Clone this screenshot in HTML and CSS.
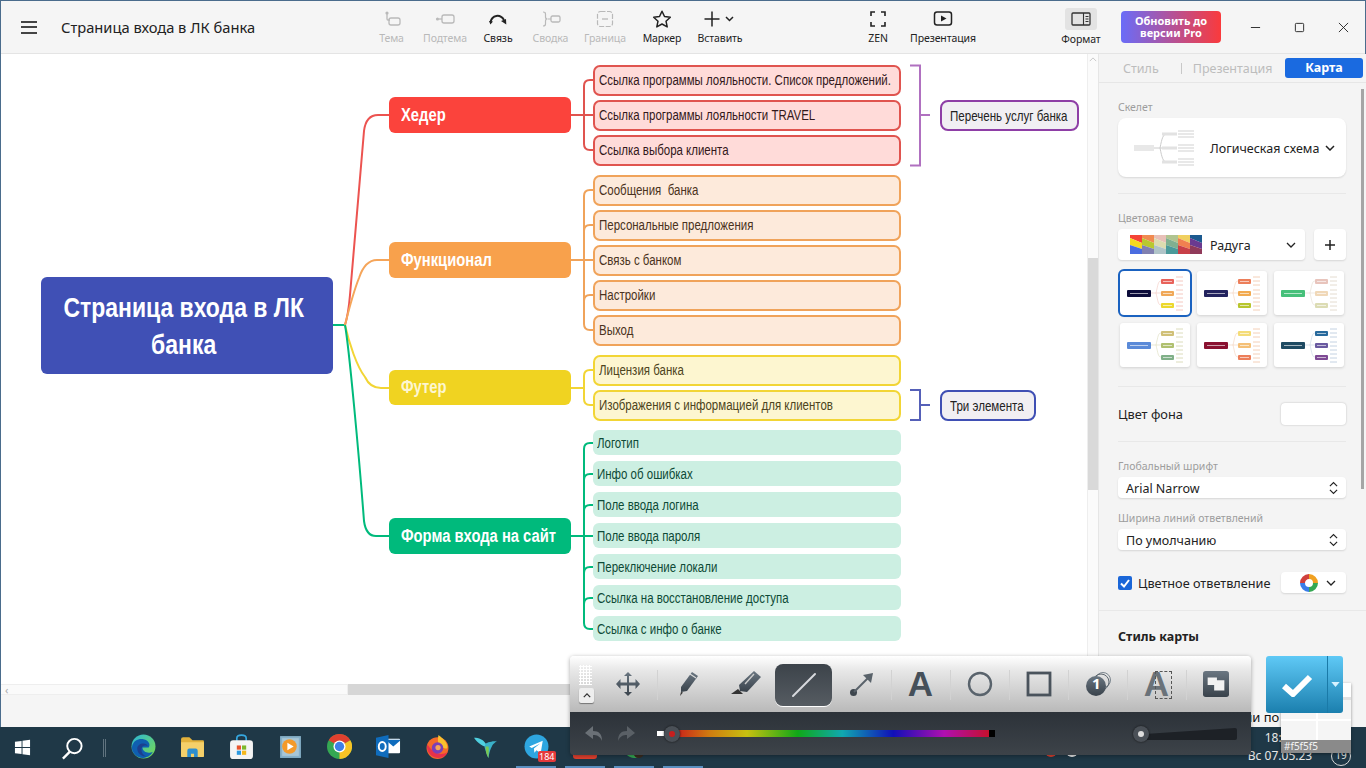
FILE: index.html
```html
<!DOCTYPE html>
<html lang="ru">
  <head>
    <meta charset="UTF-8" />
    <title>Страница входа в ЛК банка</title>
    <link rel="stylesheet" href="styles.css">
  </head>
  <body>
    <svg class="defs" width="0" height="0">
      <defs>
        <linearGradient id="edgeGrad" x1="0" y1="0" x2="1" y2="1">
          <stop offset="0" stop-color="#2bb5d8" />
          <stop offset="1" stop-color="#7bdc4a" />
        </linearGradient>
        <linearGradient id="iconGrad" x1="0" y1="0" x2="0" y2="1">
          <stop offset="0" stop-color="#6a7681" />
          <stop offset="1" stop-color="#39424b" />
        </linearGradient>
        <linearGradient id="rainbowGrad" x1="0" y1="0" x2="1" y2="0">
          <stop offset="0" stop-color="#c8231a" />
          <stop offset="0.1" stop-color="#d07a10" />
          <stop offset="0.22" stop-color="#c8c010" />
          <stop offset="0.38" stop-color="#10a818" />
          <stop offset="0.52" stop-color="#10a8b0" />
          <stop offset="0.68" stop-color="#1010b8" />
          <stop offset="0.84" stop-color="#b010b0" />
          <stop offset="1" stop-color="#c8101c" />
        </linearGradient>
        <symbol id="miniMap" viewBox="0 0 70 44">
          <g fill="none" stroke="var(--line)" stroke-width="0.6">
            <path d="M31 22h5M36 22c2-8 2-12 5-12M36 22h5M36 22c2 8 2 12 5 12" />
            <path d="M56 6h7M56 10h7M56 14h7M56 19h7M56 23h7M56 27h7M56 31h7M56 35h7M56 39h7" stroke-width="1" />
          </g>
          <rect x="7" y="19" width="24" height="7" rx="1" fill="var(--root)" />
          <rect x="41" y="8" width="13" height="5" rx="1" fill="var(--b1)" />
          <rect x="41" y="20" width="13" height="5" rx="1" fill="var(--b2)" />
          <rect x="41" y="32" width="13" height="5" rx="1" fill="var(--b3)" />
          <path d="M10 22.5h18M43 10.5h9M43 22.5h9M43 34.5h9" stroke="#fff" stroke-opacity=".6" stroke-width="1" />
        </symbol>
      </defs>
    </svg>

    <div class="window">
      <header class="titlebar">
        <button class="menu-btn" aria-label="Меню"><span></span><span></span><span></span></button>
        <div class="doc-title">Страница входа в ЛК банка</div>
        <nav class="tools">
          <div class="tool w53 off">
            <svg viewBox="0 0 20 18"><circle cx="5" cy="3" r="1.6" fill="currentColor"/><path d="M5 4v5q0 1 1 1h2" fill="none" stroke="currentColor" stroke-width="1.3"/><rect x="7" y="8" width="11" height="7" rx="2" fill="none" stroke="currentColor" stroke-width="1.3"/></svg>
            <span>Тема</span>
          </div>
          <div class="tool w54 off">
            <svg viewBox="0 0 20 18"><circle cx="2.5" cy="9" r="1.6" fill="currentColor"/><path d="M4 9h3" stroke="currentColor" stroke-width="1.3"/><rect x="7" y="5" width="12" height="8" rx="2" fill="none" stroke="currentColor" stroke-width="1.3"/></svg>
            <span>Подтема</span>
          </div>
          <div class="tool w52">
            <svg viewBox="0 0 20 18"><path d="M2.5 12C4 5 12 3.5 16 10" fill="none" stroke="#222" stroke-width="2"/><path d="M1 11l4 .6-2.6 3zM13 11l5-2 .3 5.4z" fill="#222"/></svg>
            <span>Связь</span>
          </div>
          <div class="tool w53 off">
            <svg viewBox="0 0 20 18"><path d="M2 2q2.5 0 2.5 2v3q0 2 2 2-2 0-2 2v3q0 2-2.500 2M7 9h3" fill="none" stroke="currentColor" stroke-width="1.2"/><rect x="10" y="6" width="9" height="6" rx="1.5" fill="none" stroke="currentColor" stroke-width="1.3"/></svg>
            <span>Сводка</span>
          </div>
          <div class="tool w56 off">
            <svg viewBox="0 0 20 18"><rect x="2.5" y="1.5" width="15" height="15" rx="3" fill="none" stroke="currentColor" stroke-width="1.2" stroke-dasharray="5 1.5"/><path d="M7 9h6" stroke="currentColor" stroke-width="1.3"/></svg>
            <span>Граница</span>
          </div>
          <div class="tool w58">
            <svg viewBox="0 0 20 18"><path d="M10 1.2l2.5 5.3 5.8.7-4.300 4 1.200 5.700-5.200-2.900-5.200 2.900 1.200-5.700-4.300-4 5.800-.7z" fill="none" stroke="#222" stroke-width="1.5" stroke-linejoin="round"/></svg>
            <span>Маркер</span>
          </div>
          <div class="tool w58">
            <svg class="wide" viewBox="0 0 32 18"><path d="M8 1.5v15M.5 9h15" stroke="#222" stroke-width="1.5"/><path d="M22 7l3.5 3.5L29 7" fill="none" stroke="#222" stroke-width="1.5"/></svg>
            <span>Вставить</span>
          </div>
        </nav>
        <nav class="tools view-tools">
          <div class="tool w50">
            <svg viewBox="0 0 20 18"><path d="M7 2H3v4M13 2h4v4M17 12v4h-4M7 16H3v-4" fill="none" stroke="#222" stroke-width="1.6"/></svg>
            <span>ZEN</span>
          </div>
          <div class="tool w80">
            <svg class="wide" viewBox="0 0 20 18"><rect x="1.5" y="2" width="17" height="13" rx="2.5" fill="none" stroke="#222" stroke-width="1.5"/><path d="M8 5.5l5.5 3-5.500 3z" fill="#222"/></svg>
            <span>Презентация</span>
          </div>
        </nav>
        <div class="tool format-tool">
          <div class="format-box">
            <svg viewBox="0 0 20 14"><rect x="1" y="1" width="18" height="12" rx="1" fill="none" stroke="#333" stroke-width="1.3"/><path d="M12.5 1v12M14.5 4.5h3M14.5 7h3M14.5 9.5h3" stroke="#333" stroke-width="1.1"/></svg>
          </div>
          <span>Формат</span>
        </div>
        <button class="upgrade">Обновить до<br>версии Pro</button>
        <div class="win-controls">
          <div class="win-btn"><svg viewBox="0 0 12 12"><path d="M1 6h10" stroke="#222"/></svg></div>
          <div class="win-btn"><svg viewBox="0 0 12 12"><rect x="1.5" y="1.5" width="9" height="9" rx="1" fill="none" stroke="#222"/></svg></div>
          <div class="win-btn"><svg viewBox="0 0 12 12"><path d="M1 1l10 10M11 1L1 11" stroke="#222"/></svg></div>
        </div>
      </header>

      <div class="main">
        <section class="workspace">
          <div class="canvas">
            <svg class="links" width="1086" height="630" fill="none" stroke-width="2">
              <g transform="translate(-1 -54)">
                <path d="M333 325h12" stroke="#00ba7c" />
                <path d="M345 325c3-10 4-18 5-30L364 131q2-16 14-16h11" stroke="#ec5350" />
                <path d="M345 325c3-12 8-32 14-47q6-18 18-18h12" stroke="#f5a55a" />
                <path d="M345 325c4 18 12 42 20 52q5 11 16 11h8" stroke="#f2d535" />
                <path d="M345 325c4 22 14 130 19 196q2 15 12 15h13" stroke="#00ba7c" />

                <path d="M571 115h22M593 80h-3q-6 0-6 6v58q0 6 6 6h3" stroke="#e0544f" />
                <path d="M571 260h22M593 190h-3q-6 0-6 6v128q0 6 6 6h3M584 231q0-6 6-6h3M584 301q0-6 6-6h3" stroke="#f0a35a" />
                <path d="M571 388h13M593 370h-3q-6 0-6 6v23q0 6 6 6h3" stroke="#f2d535" />
                <path d="M571 536h22M593 443h-3q-6 0-6 6v174q0 6 6 6h3M584 480q0-6 6-6h3M584 511q0-6 6-6h3M584 573q0-6 6-6h3M584 604q0-6 6-6h3" stroke="#00ba7c" />

                <path d="M910 65.5h10v100h-10M920 115h10" stroke="#b070c0" />
                <path d="M910 390h10v30h-10M920 405h10" stroke="#5560b8" />
              </g>
            </svg>

            <div class="node root"><span>Страница входа в ЛК<br>банка</span></div>
            <div class="node branch b-red"><span>Хедер</span></div>
            <div class="node branch b-orange"><span>Функционал</span></div>
            <div class="node branch b-yellow"><span>Футер</span></div>
            <div class="node branch b-green"><span>Форма входа на сайт</span></div>

            <div class="leaves">
              <div class="leaf-group red">
                <div class="leaf"><span>Ссылка программы лояльности. Список предложений.</span></div>
                <div class="leaf"><span>Ссылка программы лояльности TRAVEL</span></div>
                <div class="leaf"><span>Ссылка выбора клиента</span></div>
              </div>
              <div class="leaf-group orange">
                <div class="leaf"><span>Сообщения&nbsp; банка</span></div>
                <div class="leaf"><span>Персональные предложения</span></div>
                <div class="leaf"><span>Связь с банком</span></div>
                <div class="leaf"><span>Настройки</span></div>
                <div class="leaf"><span>Выход</span></div>
              </div>
              <div class="leaf-group yellow">
                <div class="leaf"><span>Лицензия банка</span></div>
                <div class="leaf"><span>Изображения с информацией для клиентов</span></div>
              </div>
              <div class="leaf-group green">
                <div class="leaf"><span>Логотип</span></div>
                <div class="leaf"><span>Инфо об ошибках</span></div>
                <div class="leaf"><span>Поле ввода логина</span></div>
                <div class="leaf"><span>Поле ввода пароля</span></div>
                <div class="leaf"><span>Переключение локали</span></div>
                <div class="leaf"><span>Ссылка на восстановление доступа</span></div>
                <div class="leaf"><span>Ссылка с инфо о банке</span></div>
              </div>
            </div>

            <div class="node note note-purple"><span>Перечень услуг банка</span></div>
            <div class="node note note-blue"><span>Три элемента</span></div>
          </div>
          <div class="hscroll"><div class="hscroll-left">‹</div><div class="hscroll-thumb"></div></div>
        </section>

        <div class="vscroll">
          <svg viewBox="0 0 10 6"><path d="M1 5l4-4 4 4" fill="none" stroke="#bbb"/></svg>
          <div class="vscroll-thumb"></div>
        </div>

        <aside class="panel">
          <div class="tabs">
            <span class="tab">Стиль</span>
            <span class="tab-sep"></span>
            <span class="tab">Презентация</span>
            <span class="tab active">Карта</span>
          </div>

          <div class="section skeleton">
            <div class="label">Скелет</div>
            <div class="card">
              <svg class="skeleton-pic" viewBox="0 0 60 36">
                <path d="M20 18h6M26 18c2-10 3-14 7-14M26 18c2 10 3 14 7 14M26 18h7" fill="none" stroke="#ccc"/>
                <rect y="15" width="20" height="6" fill="#e8e8e8"/>
                <path d="M28 4h15M28 18h15M28 32h15" stroke="#e2e2e2" stroke-width="3"/>
                <path d="M44 1h16M44 4h16M44 7h16M44 15h16M44 18h16M44 21h16M44 29h16M44 32h16M44 35h16" stroke="#e8e8e8" stroke-width="2"/>
              </svg>
              <span class="card-text">Логическая схема</span>
              <svg class="chev" viewBox="0 0 10 6"><path d="M1 1l4 4 4-4" fill="none" stroke="#222" stroke-width="1.5"/></svg>
            </div>
          </div>

          <div class="section theme">
            <div class="label">Цветовая тема</div>
            <div class="theme-row">
              <div class="select theme-select">
                <svg class="swatch" viewBox="0 0 72 19">
                  <path d="M0 0h12v8L0 3z" fill="#f44336"/><path d="M0 3l12 5v6L0 10z" fill="#f5d91e"/><path d="M0 10l12 4v5H0z" fill="#4a6ce0"/>
                  <path d="M12 0h12v8L12 3z" fill="#f08a50"/><path d="M12 3l12 5v6l-12-4z" fill="#b8c82e"/><path d="M12 10l12 4v5H12z" fill="#8080b0"/>
                  <path d="M24 0h12v8L24 3z" fill="#e8c0b8"/><path d="M24 3l12 5v6l-12-4z" fill="#dcdcb0"/><path d="M24 10l12 4v5H24z" fill="#b0c4c8"/>
                  <path d="M36 0h12v8L36 3z" fill="#b0c490"/><path d="M36 3l12 5v6l-12-4z" fill="#80b090"/><path d="M36 10l12 4v5H36z" fill="#4a9a9a"/>
                  <path d="M48 0h12v8L48 3z" fill="#f0d060"/><path d="M48 3l12 5v6l-12-4z" fill="#f08050"/><path d="M48 10l12 4v5H48z" fill="#c84048"/>
                  <path d="M60 0h12v8L60 3z" fill="#1c5a90"/><path d="M60 3l12 5v6l-12-4z" fill="#6a3a90"/><path d="M60 10l12 4v5H60z" fill="#903a5a"/>
                </svg>
                <span class="select-text">Радуга</span>
                <svg class="chev" viewBox="0 0 10 6"><path d="M1 1l4 4 4-4" fill="none" stroke="#222" stroke-width="1.3"/></svg>
              </div>
              <div class="select plus-btn"><svg viewBox="0 0 12 12"><path d="M6 1v10M1 6h10" stroke="#222" stroke-width="1.5"/></svg></div>
            </div>
            <div class="thumbs">
              <div class="thumb selected t1"><svg><use href="#miniMap"/></svg></div>
              <div class="thumb t2"><svg><use href="#miniMap"/></svg></div>
              <div class="thumb t3"><svg><use href="#miniMap"/></svg></div>
              <div class="thumb t4"><svg><use href="#miniMap"/></svg></div>
              <div class="thumb t5"><svg><use href="#miniMap"/></svg></div>
              <div class="thumb t6"><svg><use href="#miniMap"/></svg></div>
            </div>
          </div>

          <div class="section bg-row">
            <span>Цвет фона</span>
            <div class="color-box"></div>
          </div>

          <div class="section-wide">
            <div class="label">Глобальный шрифт</div>
            <div class="select small">
              <span>Arial Narrow</span>
              <svg class="updown" viewBox="0 0 10 14"><path d="M1 5l4-4 4 4M1 9l4 4 4-4" fill="none" stroke="#222" stroke-width="1.3"/></svg>
            </div>
            <div class="label second">Ширина линий ответвлений</div>
            <div class="select small">
              <span>По умолчанию</span>
              <svg class="updown" viewBox="0 0 10 14"><path d="M1 5l4-4 4 4M1 9l4 4 4-4" fill="none" stroke="#222" stroke-width="1.3"/></svg>
            </div>
            <div class="check-row">
              <span class="checkbox"><svg viewBox="0 0 14 14"><path d="M3 7.5l3 3 5-6.500" fill="none" stroke="#fff" stroke-width="2"/></svg></span>
              <span class="check-text">Цветное ответвление</span>
              <div class="select color-pick">
                <svg class="ring" viewBox="0 0 18 18">
                  <g fill="none" stroke-width="5">
                    <path d="M9 2.5a6.500 6.500 0 0 1 6.500 6.500" stroke="#f0a020"/>
                    <path d="M15.5 9A6.500 6.500 0 0 1 9 15.5" stroke="#35a853"/>
                    <path d="M9 15.5A6.500 6.500 0 0 1 2.5 9" stroke="#3a7de8"/>
                    <path d="M2.5 9A6.500 6.500 0 0 1 9 2.5" stroke="#d0403c"/>
                  </g>
                </svg>
                <svg class="chev" viewBox="0 0 10 6"><path d="M1 1l4 4 4-4" fill="none" stroke="#222" stroke-width="1.3"/></svg>
              </div>
            </div>
          </div>

          <div class="map-style">
            <div class="map-style-title">Стиль карты</div>
            <div class="map-style-row">Линии по Ш</div>
          </div>
          <div class="panel-scroll"></div>
        </aside>
      </div>
    </div>

    <footer class="taskbar">
      <div class="tb-start">
        <svg viewBox="0 0 18 18"><path d="M1 3l7-1v6.500H1zM9 1.900L17 .8v7.700H9zM1 9.500h7V16l-7-1zM9 9.500h8v7.700l-8-1.100z" fill="#fff"/></svg>
      </div>
      <div class="tb-search">
        <svg viewBox="0 0 24 24"><circle cx="14" cy="10" r="7.5" fill="none" stroke="#fff" stroke-width="2"/><path d="M9 16l-7 7" stroke="#fff" stroke-width="2.5"/></svg>
      </div>
      <div class="tb-sep"></div>
      <div class="tb-items">
        <div class="tb-item">
          <svg viewBox="0 0 24 24"><circle cx="12" cy="12" r="11.5" fill="url(#edgeGrad)"/><path d="M1 12C2 6 8 4 12 5c5 1 7 5 5 8h-6c0 3 3 5 6 5 1.500 0 3-.3 4-1-2 4-6 6-10 6C6 23 0 18 1 12z" fill="#0f5fb0"/><path d="M6 14c0-3 2.500-5 6-5 2 0 3.500 1 4 2.500-1.500-.8-6-1-6 3.500 0 3 2 5.500 5 6.500-5 .5-9-3-9-7.500z" fill="#1c3f8e"/></svg>
        </div>
        <div class="tb-item">
          <svg viewBox="0 0 24 24"><path d="M1 5q0-2 2-2h6l3 3h10q1 0 1 1v14q0 1-1 1H2q-1 0-1-1z" fill="#e3b23c"/><path d="M1 8h22v13q0 1-1 1H2q-1 0-1-1z" fill="#f5d06a"/><path d="M7 22v-6q0-2 2-2h6q2 0 2 2v6h-3.500v-3h-3v3z" fill="#2e8fd0"/></svg>
        </div>
        <div class="tb-item">
          <svg viewBox="0 0 24 24"><path d="M7.500 8V4q0-3 4.500-3t4.500 3v4" fill="none" stroke="#35a8e0" stroke-width="1.6"/><rect x="1" y="6" width="22" height="18" rx="3" fill="#f4f4f4"/><path d="M7.500 11h4v4h-4z" fill="#e8542c"/><path d="M12.500 11h4v4h-4z" fill="#7cb82a"/><path d="M7.500 16h4v4h-4z" fill="#2d9ae0"/><path d="M12.500 16h4v4h-4z" fill="#f5b81c"/></svg>
        </div>
        <div class="tb-item">
          <svg viewBox="0 0 24 24"><rect x="2" y="2" width="20" height="21" fill="#86b0c8"/><rect x="4" y="4" width="16" height="17" fill="#a8c6d6"/><circle cx="11" cy="12" r="7" fill="#f39a2a"/><path d="M9 8.500l6 3.500-6 3.500z" fill="#fff"/></svg>
        </div>
        <div class="tb-item">
          <svg viewBox="0 0 24 24"><circle cx="12" cy="12" r="12" fill="#35a853"/><path d="M12 12L1.600 6a12 12 0 0 1 20.800 0z" fill="#e0402f"/><path d="M12 12l10.400-6A12 12 0 0 1 12 24z" fill="#f7c325"/><circle cx="12" cy="12" r="5.8" fill="#fff"/><circle cx="12" cy="12" r="4.500" fill="#3f7fe8"/></svg>
        </div>
        <div class="tb-item">
          <svg viewBox="0 0 26 24"><path d="M9 4h15q1 0 1 1v13q0 1-1 1H9z" fill="#fff"/><path d="M11 6l7 6 7-6v-1H11z" fill="#0f6cbd"/><path d="M0 3l13-3v24L0 21z" fill="#0f6cbd"/><ellipse cx="6.5" cy="12" rx="3.6" ry="4.6" fill="none" stroke="#fff" stroke-width="2"/></svg>
        </div>
        <div class="tb-item">
          <svg viewBox="0 0 24 24"><circle cx="12" cy="13.5" r="10.5" fill="#f46a2a"/><path d="M13 1c2 2 6 4 8 9 2 6-2 4-6 2-3-2-3-7-2-11z" fill="#fbc02d"/><path d="M2 10c-1 8 5 13 11 13 4 0 7-2 9-6-4 3-10 3-14-1-3-2-4-4-6-6z" fill="#e8314a"/><circle cx="12" cy="13.5" r="5.5" fill="#7b3fb8"/><circle cx="12.5" cy="13" r="2.5" fill="#f5a55a"/></svg>
        </div>
        <div class="tb-item">
          <svg viewBox="0 0 26 24"><path d="M0 3c5 0 10 2 12 6l3 3c-2 1-5 0-8-2C4 8 2 6 0 3z" fill="#4fd0e0"/><path d="M12 9c2-1 4-2 6-2 2-1 4 0 6-1-2 2-4 3-5 5-2 4-3 7-4 13-2-4-3-8-4-11z" fill="#3ab0c8"/><path d="M15 12c1 3 0 7 0 12-2-3-3-8-3-12z" fill="#7cc850"/></svg>
        </div>
        <div class="tb-item open">
          <svg viewBox="0 0 24 24"><circle cx="12" cy="12" r="11.5" fill="#2ea6e0"/><path d="M5 12l13-5.500-2 12-4-3-2 2.500-.5-4 6-5-8 4.500z" fill="#fff"/></svg>
          <span class="badge">184</span>
        </div>
        <div class="tb-item open"><span class="app-red"></span></div>
        <div class="tb-item open">
          <svg viewBox="0 0 24 24"><circle cx="12" cy="12" r="11" fill="#35a853"/><circle cx="16" cy="18" r="5" fill="#3a2c20"/></svg>
        </div>
        <div class="tb-item open split"></div>
      </div>
      <div class="tray">
        <span class="tray-dot red"></span>
        <span class="tray-dot white"></span>
        <div class="clock"><div>18:52</div><div>Вс 07.05.23</div></div>
        <span class="notif">19</span>
      </div>
    </footer>

    <!-- screenshot tool floating over the window -->
    <div class="shot-bar">
      <div class="shot-tools">
        <div class="grip">
          <div class="grip-dots"></div>
          <div class="grip-btn"><svg viewBox="0 0 10 6"><path d="M1 5l4-4 4 4" fill="none" stroke="#333" stroke-width="1.6"/></svg></div>
        </div>
        <div class="shot-tool">
          <svg viewBox="0 0 26 26"><path d="M13 1l4 4h-3v6.500h6.500V8l4.500 5-4.500 5v-3.500H14V21h3l-4 4-4-4h3v-6.500H5.500V18L1 13l4.500-5v3.500H12V5H9z" fill="url(#iconGrad)"/></svg>
        </div>
        <div class="shot-tool sep">
          <svg viewBox="0 0 26 26"><path d="M18 1l6 4-11 15-6 1 0-5z" fill="url(#iconGrad)"/><path d="M16 3l6 4" stroke="#ddd" stroke-width="1.2"/><path d="M7 21l-1 4 3-3.500z" fill="#333"/></svg>
        </div>
        <div class="shot-tool">
          <svg class="marker" viewBox="0 0 32 28"><path d="M24 1l7 6-14 15-7-1-1-6z" fill="url(#iconGrad)"/><path d="M15 14l9-10" stroke="#ccc" stroke-width="1.4"/><path d="M8 19l5 5H1z" fill="#333"/></svg>
        </div>
        <div class="shot-tool active">
          <svg viewBox="0 0 26 26"><path d="M2 24L24 2" stroke="#d8dade" stroke-width="2" stroke-linecap="round"/></svg>
        </div>
        <div class="shot-tool">
          <svg viewBox="0 0 26 26"><circle cx="4.500" cy="21.500" r="3.5" fill="#3e464e"/><path d="M5 21L21 5" stroke="#59626a" stroke-width="2"/><path d="M14 4l10-2-2 10z" fill="#59626a"/></svg>
        </div>
        <div class="shot-tool sep shot-letter">A</div>
        <div class="shot-tool sep">
          <svg viewBox="0 0 26 26"><circle cx="13" cy="13" r="11" fill="none" stroke="#59636c" stroke-width="2.4"/></svg>
        </div>
        <div class="shot-tool sep">
          <svg viewBox="0 0 26 26"><rect x="2" y="2" width="22" height="22" fill="none" stroke="#4a535c" stroke-width="2.8"/></svg>
        </div>
        <div class="shot-tool sep shot-number">
          <svg viewBox="0 0 26 26"><circle cx="18" cy="9" r="7.5" fill="none" stroke="#7b858e"/><circle cx="16" cy="11" r="8" fill="none" stroke="#5c666f"/><circle cx="11" cy="15" r="10" fill="url(#iconGrad)"/></svg>
          <span>1</span>
        </div>
        <div class="shot-tool sep shot-letter ghost">A<span class="dash"></span></div>
        <div class="shot-tool sep">
          <svg viewBox="0 0 28 28"><rect width="28" height="28" rx="3" fill="url(#iconGrad)"/><path d="M5 7h10v3h8v11H12v-6H5z" fill="#f2f2f2"/></svg>
        </div>
      </div>
      <div class="shot-colors">
        <svg class="arrow" viewBox="0 0 20 18"><path d="M9 1L1 8l8 6v-4c4 0 7 1 9 6 0-7-3-10-9-10z" fill="#6a7076"/></svg>
        <svg class="arrow" viewBox="0 0 20 18"><path d="M11 1l8 7-8 6v-4c-4 0-7 1-9 6 0-7 3-10 9-10z" fill="#5a6066"/></svg>
        <div class="color-slider">
          <span class="white-end"></span>
          <span class="knob"><i></i></span>
          <svg class="rainbow" viewBox="0 0 318 7" preserveAspectRatio="none"><rect width="318" height="7" fill="url(#rainbowGrad)"/><rect x="312" width="6" height="7" fill="#000"/></svg>
        </div>
        <div class="size-slider">
          <span class="knob mini"><i></i></span>
          <svg class="wedge" viewBox="0 0 96 12" preserveAspectRatio="none"><path d="M0 6L94 0q2 0 2 2v8q0 2-2 2H0z" fill="#1d2126"/></svg>
        </div>
      </div>
    </div>

    <div class="magnifier">
      <div class="mag-view"></div>
      <div class="mag-label">#f5f5f5</div>
    </div>

    <div class="confirm">
      <div class="confirm-main"><svg viewBox="0 0 32 24"><path d="M3 13l9 8L29 4" fill="none" stroke="#fff" stroke-width="6"/></svg></div>
      <div class="confirm-side"><svg viewBox="0 0 10 6"><path d="M0 0h10L5 6z" fill="#d6f2ff"/></svg></div>
    </div>
  </body>
</html>
```

FILE: styles.css
```css
* {
  box-sizing: border-box;
}
html,
body {
  margin: 0;
  height: 768px;
  overflow: hidden;
}
body {
  position: relative;
  width: 1366px;
  font-family: "Noto Sans", "Open Sans", sans-serif;
  color: #222;
  background-color: #f5f5f5;
}
svg {
  display: block;
}
.defs {
  position: absolute;
}
.window {
  height: 727px;
  display: flex;
  flex-direction: column;
  border: 1px solid #4a6c8c;
  border-bottom: none;
}

/* title bar */
.titlebar {
  height: 53px;
  flex: none;
  display: flex;
  background-color: #f5f5f5;
  border-bottom: 1px solid #e4e4e4;
}
.menu-btn {
  width: 60px;
  flex: none;
  padding: 0 0 0 20px;
  border: none;
  background: none;
  display: flex;
  flex-direction: column;
  justify-content: center;
  gap: 3.5px;
}
.menu-btn span {
  width: 16px;
  height: 2px;
  background-color: #444;
}
.doc-title {
  width: 304px;
  flex: none;
  font-size: 14.7px;
  line-height: 53px;
  white-space: nowrap;
}
.tools {
  display: flex;
}
.view-tools {
  margin-left: 104px;
}
.tool {
  display: flex;
  flex-direction: column;
  align-items: center;
  padding-top: 9px;
  font-size: 10.5px;
  letter-spacing: -0.1px;
  color: #222;
  white-space: nowrap;
}
.tool svg {
  width: 20px;
  height: 18px;
  margin-bottom: 3px;
}
.tool svg.wide {
  width: 32px;
}
.tool.off {
  color: #b9b9b9;
}
.w50 { width: 50px; }
.w52 { width: 52px; }
.w53 { width: 53px; }
.w54 { width: 54px; }
.w56 { width: 56px; }
.w58 { width: 58px; }
.w80 { width: 80px; }
.format-tool {
  width: 60px;
  margin-left: 68px;
  padding-top: 7px;
}
.format-box {
  width: 32px;
  height: 22px;
  border-radius: 3px;
  background-color: #e3e3e3;
  display: flex;
  align-items: center;
  justify-content: center;
  margin-bottom: 2px;
}
.format-box svg {
  width: 22px;
  height: 14px;
  margin: 0;
}
.upgrade {
  width: 100px;
  height: 32px;
  margin: 10px 0 0 10px;
  padding: 0;
  border: none;
  border-radius: 4px;
  background: linear-gradient(90deg, #6a6cf8, #fa3a3c);
  color: #fff;
  font-family: inherit;
  font-size: 11px;
  font-weight: 700;
  line-height: 12px;
}
.win-controls {
  display: flex;
  margin-left: 12px;
}
.win-btn {
  width: 44px;
  display: flex;
  align-items: center;
  justify-content: center;
}
.win-btn svg {
  width: 11px;
  height: 11px;
}

.main {
  flex: 1;
  display: flex;
  min-height: 0;
}

/* mind map */
.workspace {
  width: 1086px;
  flex: none;
  display: flex;
  flex-direction: column;
}
.canvas {
  position: relative;
  height: 630px;
  background-color: #fff;
  overflow: hidden;
}
.links {
  position: absolute;
  left: 0;
  top: 0;
}
.node {
  position: absolute;
  display: flex;
  align-items: center;
  font-family: "Liberation Sans", sans-serif;
  white-space: nowrap;
}
/* no Arial Narrow here, so the text is squeezed to its width */
.node span,
.leaf span {
  display: inline-block;
  transform: scaleX(0.82);
  transform-origin: 0 50%;
}
.root {
  left: 40px;
  top: 223px;
  width: 292px;
  height: 97px;
  padding-right: 6px;
  justify-content: center;
  text-align: center;
  border-radius: 6px;
  background-color: #4050b5;
  color: #fff;
  font-size: 28px;
  font-weight: 700;
  line-height: 37px;
}
.root span {
  flex: none;
  transform-origin: 50% 50%;
}
.branch {
  left: 388px;
  width: 182px;
  height: 36px;
  padding-left: 12px;
  border-radius: 6px;
  color: #fff;
  font-size: 18px;
  font-weight: 700;
}
.b-red {
  top: 43px;
  background-color: #fb433c;
}
.b-orange {
  top: 188px;
  background-color: #f8a14c;
}
.b-yellow {
  top: 316px;
  height: 35px;
  background-color: #f0d321;
  color: #fdf6d0;
}
.b-green {
  top: 464px;
  background-color: #00ba7c;
}
.leaves {
  position: absolute;
  left: 592px;
  top: 11px;
  width: 308px;
  display: flex;
  flex-direction: column;
  gap: 9px;
  font-family: "Liberation Sans", sans-serif;
  font-size: 14px;
}
.leaf-group {
  display: flex;
  flex-direction: column;
  gap: 4px;
}
.leaf {
  height: 31px;
  display: flex;
  align-items: center;
  padding: 0 0 2px 4px;
  border: 2.5px solid;
  border-radius: 7px;
  white-space: nowrap;
}
.red .leaf {
  border-color: #e0544f;
  background-color: #ffdbd9;
  color: #33181a;
}
.orange .leaf {
  border-color: #f0a35a;
  background-color: #fdeadb;
  color: #4a3220;
}
.yellow .leaf {
  border-color: #f2d535;
  background-color: #fdf6d0;
  color: #4c4420;
}
.green {
  gap: 6px;
}
.green .leaf {
  height: 25px;
  padding-bottom: 0;
  border: none;
  border-radius: 6px;
  background-color: #ccefe2;
  color: #0e4a36;
}
.note {
  height: 31px;
  padding-left: 8px;
  border: 2.5px solid;
  border-radius: 8px;
  background-color: #f1eff3;
  font-size: 14.1px;
  color: #222;
}
.note-purple {
  left: 939px;
  top: 46px;
  width: 139px;
  border-color: #8e3ea6;
}
.note-blue {
  left: 939px;
  top: 336px;
  width: 96px;
  border-color: #3f4fb4;
}
.hscroll {
  height: 11px;
  display: flex;
}
.hscroll-left {
  width: 347px;
  padding-left: 4px;
  font-size: 11px;
  line-height: 9px;
  color: #aaa;
  background-color: #fafafa;
  border: 1px solid #eee;
  border-left: none;
}
.hscroll-thumb {
  flex: 1;
  background-color: #d6d6d6;
}
.vscroll {
  width: 11px;
  flex: none;
  background-color: #fbfbfb;
  border-left: 1px solid #eee;
  height: 640px;
}
.vscroll svg {
  width: 8px;
  height: 5px;
  margin: 3px 0 0 1px;
}
.vscroll-thumb {
  height: 232px;
  margin-top: 196px;
  background-color: #d9d9d9;
}

/* right panel */
.panel {
  position: relative;
  flex: 1;
  background-color: #f4f4f4;
  border-left: 1px solid #e6e6e6;
}
.panel-scroll {
  position: absolute;
  right: 2px;
  top: 35px;
  width: 3px;
  height: 400px;
  background-color: #a5a5a5;
}
.tabs {
  height: 29px;
  display: flex;
  align-items: center;
  padding: 4px 3px 4px 24px;
  border-bottom: 1px solid #e6e6e6;
  font-size: 12.5px;
  color: #bdbdbd;
}
.tab-sep {
  width: 1px;
  height: 11px;
  margin: 0 11px 0 22px;
  background-color: #c8c8c8;
}
.tab.active {
  width: 78px;
  height: 20px;
  margin-left: auto;
  border-radius: 3px;
  background-color: #1a6ae0;
  color: #fff;
  font-weight: 700;
  font-size: 12.5px;
  line-height: 20px;
  text-align: center;
}
.section {
  margin: 0 20px 0 19px;
  border-bottom: 1px solid #e8e8e8;
}
.label {
  height: 14px;
  margin-bottom: 4px;
  font-size: 10.5px;
  line-height: 14px;
  color: #9d9d9d;
}
.skeleton {
  height: 111px;
  padding-top: 17px;
}
.card {
  height: 59px;
  display: flex;
  align-items: center;
  padding-left: 16px;
  border-radius: 8px;
  background-color: #fff;
  box-shadow: 0 1px 2px rgba(0, 0, 0, 0.12);
}
.skeleton-pic {
  width: 60px;
  height: 36px;
  flex: none;
}
.card-text {
  margin-left: 16px;
  padding-top: 2px;
  font-size: 12.5px;
}
.chev {
  width: 10px;
  height: 6px;
  margin-left: 6px;
  flex: none;
}
.theme {
  height: 193px;
  padding-top: 17px;
}
.theme-row {
  display: flex;
  gap: 9px;
}
.select {
  display: flex;
  align-items: center;
  border-radius: 4px;
  background-color: #fff;
  box-shadow: 0 1px 2px rgba(0, 0, 0, 0.13);
}
.theme-select {
  width: 187px;
  height: 31px;
  padding: 0 9px 0 12px;
}
.swatch {
  width: 72px;
  height: 19px;
  flex: none;
}
.select-text {
  margin-left: 8px;
  padding-top: 2px;
  flex: 1;
  font-size: 12.5px;
}
.plus-btn {
  width: 32px;
  height: 31px;
  justify-content: center;
}
.plus-btn svg {
  width: 12px;
  height: 12px;
}
.thumbs {
  display: grid;
  grid-template-columns: repeat(3, 70px);
  grid-auto-rows: 44px;
  column-gap: 7px;
  row-gap: 8px;
  margin: 11px 0 0 2px;
}
.thumb {
  border-radius: 3px;
  background-color: #fff;
  box-shadow: 0 1px 3px rgba(0, 0, 0, 0.15);
}
.thumb svg {
  width: 70px;
  height: 44px;
}
.thumb.selected {
  outline: 2px solid #1a62c0;
  border-radius: 4px;
}
.t1 { --root: #0c0c3a; --line: #f4c8c0; --b1: #e8625a; --b2: #f0a858; --b3: #ecd82e; }
.t2 { --root: #23235e; --line: #f4d0b8; --b1: #ec7e5a; --b2: #f2aa50; --b3: #b8c62e; }
.t3 { --root: #46c07a; --line: #e4dcd0; --b1: #e8c4bc; --b2: #f0d8b8; --b3: #dcdcb4; }
.t4 { --root: #5a8ad8; --line: #dcdcbc; --b1: #d0c078; --b2: #b0c070; --b3: #80b088; }
.t5 { --root: #8a1030; --line: #f4d0b8; --b1: #f4dc78; --b2: #f4c078; --b3: #ec7e5a; }
.t6 { --root: #1e4a62; --line: #c4d2e2; --b1: #28699c; --b2: #6a5aa0; --b3: #7e4a94; }
.bg-row {
  height: 55px;
  display: flex;
  align-items: center;
  justify-content: space-between;
  font-size: 12.8px;
}
.color-box {
  width: 65px;
  height: 22px;
  border-radius: 4px;
  background-color: #fff;
  box-shadow: 0 0 2px rgba(0, 0, 0, 0.25);
}
.section-wide {
  height: 169px;
  padding: 17px 20px 0 19px;
  border-bottom: 1px solid #e8e8e8;
}
.small {
  height: 21px;
  padding: 0 8px;
  justify-content: space-between;
  font-size: 12.5px;
}
.small span {
  padding-top: 2px;
}
.updown {
  width: 9px;
  height: 14px;
}
.second {
  margin-top: 13px;
}
.check-row {
  display: flex;
  align-items: center;
  margin-top: 22px;
  height: 21px;
  font-size: 12.7px;
}
.checkbox {
  width: 14px;
  height: 14px;
  flex: none;
  border-radius: 2px;
  background-color: #1a66d8;
}
.check-text {
  margin-left: 6px;
  white-space: nowrap;
}
.color-pick {
  width: 65px;
  height: 21px;
  margin-left: auto;
  flex: none;
  padding-left: 19px;
}
.ring {
  width: 18px;
  height: 18px;
}
.color-pick .chev {
  margin-left: 8px;
}
.map-style {
  padding: 17px 0 0 19px;
}
.map-style-title {
  font-size: 12.5px;
  font-weight: 700;
  line-height: 18px;
}
.map-style-row {
  margin: 62px 0 0 101px;
  font-size: 13px;
  line-height: 18px;
  color: #111;
  white-space: nowrap;
}

/* taskbar */
.taskbar {
  height: 41px;
  display: flex;
  background-color: #1f3847;
  color: #e8e8e8;
}
.tb-start {
  width: 44px;
  display: flex;
  align-items: center;
  justify-content: center;
}
.tb-start svg {
  width: 17px;
  height: 17px;
}
.tb-search {
  width: 56px;
  display: flex;
  align-items: center;
  justify-content: center;
}
.tb-search svg {
  width: 23px;
  height: 24px;
}
.tb-sep {
  width: 3px;
  height: 18px;
  margin: 12px 17px 0 3px;
  border-left: 1px solid #60737f;
  border-right: 1px solid #60737f;
}
.tb-items {
  display: flex;
  gap: 9.13px;
}
.tb-item {
  position: relative;
  width: 40px;
  display: flex;
  align-items: center;
  justify-content: center;
  border-bottom: 2px solid transparent;
}
.tb-item svg {
  width: 25px;
  height: 25px;
}
.tb-item.open {
  border-bottom-color: #5a8fc0;
}
.badge {
  position: absolute;
  right: 0;
  bottom: 4px;
  height: 11px;
  padding: 0 1.5px;
  border-radius: 2px;
  background-color: #e5393b;
  color: #fff;
  font-size: 9px;
  line-height: 11px;
}
.app-red {
  width: 24px;
  height: 24px;
  border-radius: 3px;
  background-color: #e0402f;
}
.tray {
  margin-left: auto;
  display: flex;
  align-items: flex-start;
  padding-right: 15px;
}
.tray-dot {
  width: 12px;
  height: 12px;
  margin: 18px 9px 0 0;
  border-radius: 50%;
}
.tray-dot.red {
  background-color: #e0402f;
}
.tray-dot.white {
  margin-right: 166px;
  background-color: #eee;
}
.clock {
  width: 72px;
  text-align: center;
  font-size: 12px;
  line-height: 18px;
  padding-top: 2px;
}
.notif {
  width: 20px;
  height: 20px;
  margin: 19px 0 0 15px;
  border: 1.5px solid #d8d8d8;
  border-radius: 50%;
  font-size: 10px;
  line-height: 17px;
  text-align: center;
}

/* screenshot tool */
.shot-bar {
  position: absolute;
  left: 570px;
  top: 656px;
  width: 681px;
  height: 99px;
  border-radius: 4px;
  box-shadow: 0 1px 4px rgba(0, 0, 0, 0.35);
  overflow: hidden;
}
.shot-tools {
  height: 56px;
  display: flex;
  background: linear-gradient(#ffffff, #e8e8e8 25%, #b9b9b9);
}
.shot-colors {
  height: 43px;
  display: flex;
  align-items: center;
  padding-left: 14px;
  background: linear-gradient(#2c3239, #3d4349);
}
.grip {
  width: 28px;
  padding: 9px 0 0 9px;
}
.grip-dots {
  width: 13px;
  height: 20px;
  background-image: radial-gradient(#fff 1px, transparent 1.2px);
  background-size: 3px 3px;
}
.grip-btn {
  width: 15px;
  height: 15px;
  margin-top: 3px;
  display: flex;
  align-items: center;
  justify-content: center;
  border-radius: 2px;
  background-color: #eee;
  box-shadow: 0 1px 1px rgba(0, 0, 0, 0.4);
}
.grip-btn svg {
  width: 8px;
  height: 5px;
}
.shot-tool {
  position: relative;
  width: 59px;
  display: flex;
  align-items: center;
  justify-content: center;
}
.shot-tool svg {
  width: 26px;
  height: 26px;
}
.shot-tool svg.marker {
  width: 32px;
  height: 28px;
}
.shot-tool.sep::before {
  content: "";
  position: absolute;
  left: 0;
  top: 14px;
  height: 30px;
  border-left: 1px solid #d2d2d2;
}
.shot-tool.active {
  width: 57px;
  height: 42px;
  margin: 8px 0 0 0;
  border-radius: 8px;
  background: linear-gradient(#3c434a, #565c62);
  box-shadow: 0 1px 0 #fff;
}
.shot-letter {
  font-family: "Liberation Sans", sans-serif;
  font-size: 35px;
  font-weight: 700;
  color: #46505a;
}
.shot-letter.ghost {
  color: #6a7279;
}
.dash {
  position: absolute;
  left: 28px;
  top: 15px;
  width: 17px;
  height: 28px;
  border: 1px dashed #555;
}
.shot-number span {
  position: absolute;
  left: 24px;
  top: 17px;
  color: #fff;
  font-size: 15px;
  font-weight: 700;
}
.arrow {
  width: 20px;
  height: 18px;
  margin-right: 12px;
}
.color-slider {
  width: 338px;
  margin-left: 9px;
  display: flex;
  align-items: center;
  flex: none;
}
.white-end {
  width: 7px;
  height: 5px;
  background-color: #fff;
}
.knob {
  width: 16px;
  height: 16px;
  flex: none;
  display: flex;
  align-items: center;
  justify-content: center;
  border-radius: 50%;
  background-color: #4a5057;
  box-shadow: 0 0 2px #111;
  position: relative;
  z-index: 1;
}
.knob i {
  width: 6px;
  height: 6px;
  border-radius: 50%;
  background-color: #c81e1e;
}
.knob.mini i {
  background-color: #ddd;
}
.rainbow {
  width: 318px;
  height: 7px;
  margin-left: -3px;
}
.size-slider {
  margin-left: 138px;
  width: 108px;
  display: flex;
  align-items: center;
}
.wedge {
  width: 92px;
  height: 12px;
  margin-left: -4px;
}
.magnifier {
  position: absolute;
  left: 1281px;
  top: 683px;
  width: 70px;
  height: 70px;
  overflow: hidden;
  box-shadow: 0 1px 3px rgba(0, 0, 0, 0.4);
}
.mag-view {
  height: 57px;
  background-color: #f5f5f5;
  background-image:
    linear-gradient(#fff, #fff),
    linear-gradient(#fff, #fff),
    linear-gradient(#fff, #fff),
    linear-gradient(#e2e2e2, #e2e2e2);
  background-repeat: no-repeat;
  background-size: 2px 57px, 70px 2px, 70px 14px, 70px 3px;
  background-position: 35px 0, 0 36px, 0 0, 0 14px;
}
.mag-label {
  height: 13px;
  padding-left: 3px;
  background-color: #8a8a8a;
  color: #f5f5f5;
  font-size: 10px;
  line-height: 13px;
}
.confirm {
  position: absolute;
  left: 1266px;
  top: 656px;
  width: 77px;
  height: 57px;
  display: flex;
  border-radius: 3px;
  overflow: hidden;
  background: linear-gradient(#5fc9f6, #1b7fae);
}
.confirm-main {
  width: 61px;
  display: flex;
  align-items: center;
  justify-content: center;
}
.confirm-main svg {
  width: 32px;
  height: 24px;
}
.confirm-side {
  flex: 1;
  display: flex;
  align-items: center;
  justify-content: center;
  border-left: 1px solid #1a7aa8;
}
.confirm-side svg {
  width: 9px;
  height: 5px;
}
```
